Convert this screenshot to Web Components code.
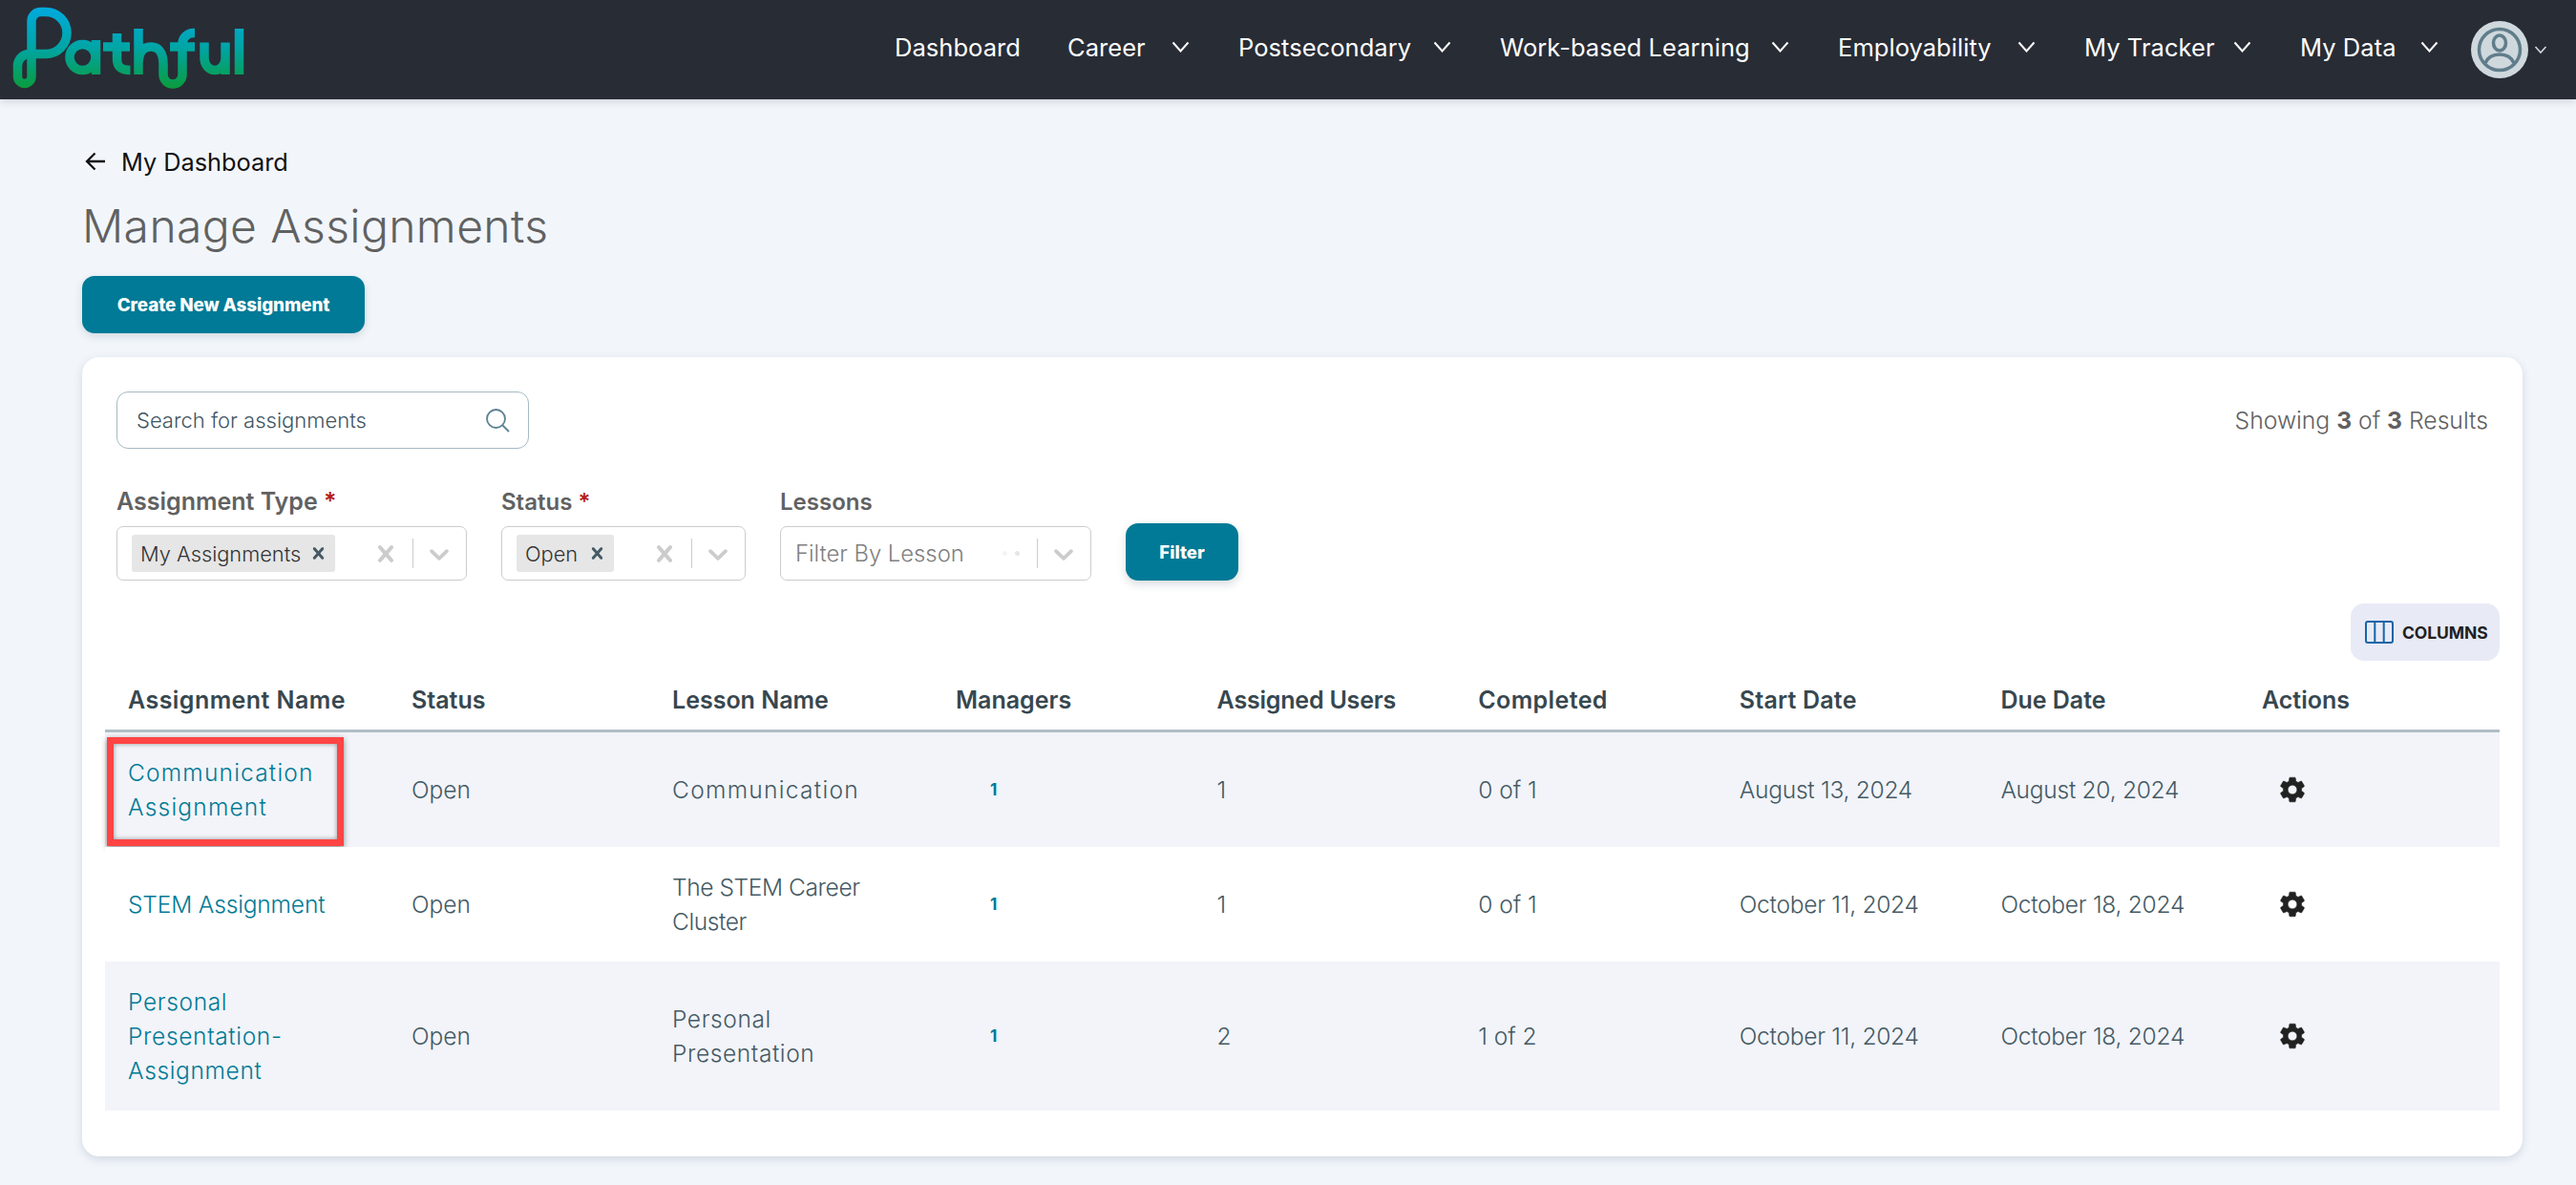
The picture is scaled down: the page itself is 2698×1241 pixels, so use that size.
<!DOCTYPE html>
<html lang="en"><head><meta charset="utf-8"><title>Manage Assignments</title>
<style>
html,body{margin:0;padding:0;background:#f2f6fb}
body{font-family:Inter,"Liberation Sans",sans-serif;height:1241px;overflow:hidden}
</style></head><body>
<app-shell>
  <app-header>
    <nav-item w="181">Dashboard</nav-item>
    <nav-item w="179" caret>Career</nav-item>
    <nav-item w="274" caret>Postsecondary</nav-item>
    <nav-item w="354" caret>Work-based Learning</nav-item>
    <nav-item w="258" caret>Employability</nav-item>
    <nav-item w="226" caret>My Tracker</nav-item>
    <nav-item w="179" pad="34" caret>My Data</nav-item>
  </app-header>
  <assign-page>
    <assign-toolbar slot="filters"></assign-toolbar>
    <assign-table slot="table">
      <assign-row alt highlight name="Communication|Assignment" name-ls="1.2" lesson="Communication" lesson-ls="1.3" assigned="1" completed="0 of 1" start="August 13, 2024" due="August 20, 2024" h="120"></assign-row>
      <assign-row name="STEM Assignment" name-ls="-.15" lesson="The STEM Career|Cluster" lesson-ls="-.4" assigned="1" completed="0 of 1" start="October 11, 2024" due="October 18, 2024" h="120"></assign-row>
      <assign-row alt name="Personal|Presentation-|Assignment" name-ls=".65" lesson="Personal|Presentation" lesson-ls=".6" assigned="2" completed="1 of 2" start="October 11, 2024" due="October 18, 2024" h="156"></assign-row>
    </assign-table>
  </assign-page>
</app-shell>
<script>
const CLEAR='M14.348 14.849c-0.469 0.469-1.229 0.469-1.697 0l-2.651-3.030-2.651 3.029c-0.469 0.469-1.229 0.469-1.697 0-0.469-0.469-0.469-1.229 0-1.697l2.758-3.15-2.759-3.152c-0.469-0.469-0.469-1.228 0-1.697s1.228-0.469 1.697 0l2.652 3.031 2.651-3.031c0.469-0.469 1.228-0.469 1.697 0s0.469 1.229 0 1.697l-2.758 3.152 2.758 3.15c0.469 0.469 0.469 1.229 0 1.698z';
const DOWN='M4.516 7.548c0.436-0.446 1.043-0.481 1.576 0l3.908 3.747 3.908-3.747c0.533-0.481 1.141-0.446 1.574 0 0.436 0.445 0.408 1.197 0 1.615-0.406 0.418-4.695 4.502-4.695 4.502-0.217 0.223-0.502 0.335-0.787 0.335s-0.57-0.112-0.789-0.335c0 0-4.287-4.084-4.695-4.502s-0.436-1.17 0-1.615z';
const GEAR='M19.14 12.94c.04-.3.06-.61.06-.94 0-.32-.02-.64-.07-.94l2.03-1.58c.18-.14.23-.41.12-.61l-1.92-3.32c-.12-.22-.37-.29-.59-.22l-2.39.96c-.5-.38-1.03-.7-1.62-.94l-.36-2.54c-.04-.24-.24-.41-.48-.41h-3.84c-.24 0-.43.17-.47.41l-.36 2.54c-.59.24-1.13.57-1.62.94l-2.39-.96c-.22-.08-.47 0-.59.22L2.74 8.87c-.12.21-.08.47.12.61l2.03 1.58c-.05.3-.09.63-.09.94s.02.64.07.94l-2.03 1.58c-.18.14-.23.41-.12.61l1.92 3.32c.12.22.37.29.59.22l2.39-.96c.5.38 1.03.7 1.62.94l.36 2.54c.05.24.24.41.48.41h3.84c.24 0 .44-.17.47-.41l.36-2.54c.59-.24 1.13-.56 1.62-.94l2.39.96c.22.08.47 0 .59-.22l1.92-3.32c.12-.22.07-.47-.12-.61l-2.01-1.58zM12 15.6c-1.98 0-3.6-1.62-3.6-3.6s1.62-3.6 3.6-3.6 3.6 1.62 3.6 3.6-1.62 3.6-3.6 3.6z';
const COLS='297px 273px 297px repeat(5,273.6px) 1fr';
function def(name,html){
  customElements.define(name,class extends HTMLElement{
    constructor(){super();this.attachShadow({mode:'open'});}
    connectedCallback(){this.shadowRoot.innerHTML=typeof html==='function'?html(this):html;}
  });
}
def('app-shell',`<style>:host{display:block}</style><slot></slot>`);
def('app-header',`<style>
:host{display:flex;align-items:center;height:104px;background:#282c35;box-shadow:0 2px 8px rgba(40,44,53,.18);position:relative;color:#fff}
nav{display:flex;margin-left:auto;align-items:center;margin-top:-6px}
.me{display:flex;align-items:center;width:110px;gap:6px}
</style>
<svg width="270" height="104" viewBox="0 0 270 104" style="display:block;flex:none" aria-label="Pathful logo" role="img">
<defs><linearGradient id="g" gradientUnits="userSpaceOnUse" x1="0" y1="8" x2="0" y2="92"><stop offset="0" stop-color="#00aadd"/><stop offset=".5" stop-color="#00a5a5"/><stop offset="1" stop-color="#0a9c3e"/></linearGradient></defs>
<g fill="none" stroke="url(#g)" stroke-width="9.500" stroke-linejoin="round">
<path d="M33 80V22a9.500 9.500 0 0 1 9.500-9.500H48a22 22 0 0 1 0 44H31a12.500 12.500 0 0 0-12.500 12.500V80a7.250 7.500 0 0 0 14.500 0"/>
<ellipse cx="86.500" cy="60" rx="13.500" ry="13.500"/><path d="M100.500 42v36"/>
<path d="M122.500 35v26c0 9 4 12.500 14 12.500M108 49h28"/>
<path d="M145 30v48M145 67c0-12 5-18 13-18s13 6 13 18v11a10 10 0 0 0 20 0V46a11.500 11.500 0 0 1 11.500-11.500H204M178 49h26"/>
<path d="M214 44.500V61a11 12.500 0 0 0 22 0V44.500M236 58v20"/>
<path d="M250.500 30v48"/>
</g></svg>
<nav><slot></slot></nav>
<div class="me">
<svg width="60" height="60" viewBox="0 0 60 60"><circle cx="30" cy="30" r="30" fill="#cfd8dc"/><g fill="none" stroke="#607d8b" stroke-width="3.500"><circle cx="30" cy="30" r="21.500"/><ellipse cx="30" cy="23" rx="6.500" ry="8"/><path d="M15 44c3-7 9-9 15-9s12 2 15 9"/></g></svg>
<svg width="14" height="10" viewBox="0 0 14 10"><path d="M1.500 2l5.500 6 5.500-6" fill="none" stroke="#cfd8dc" stroke-width="1.600"/></svg>
</div>`);
def('nav-item',t=>`<style>
:host{display:flex;align-items:center;box-sizing:border-box;font-size:25.500px;font-weight:400;letter-spacing:.05px;color:#fff;white-space:nowrap;width:${t.getAttribute('w')||181}px;padding-right:${t.hasAttribute('caret')?(t.getAttribute('pad')||'51')+'px':'0'}}
svg{margin-left:auto;display:${t.hasAttribute('caret')?'block':'none'}}
</style><span><slot></slot></span><svg width="19" height="12" viewBox="0 0 19 12"><path d="M1.500 1.500L9.500 10.500l8-9" fill="none" stroke="#fff" stroke-width="2"/></svg>`);
def('assign-page',`<style>
:host{display:block;padding:0 56px 0 86px}
.back{display:flex;align-items:center;gap:16px;height:36px;margin-top:47px;font-size:25.300px;color:#111;font-weight:400}
svg{margin-left:3px;display:block}
h1{font-weight:300;font-size:48px;letter-spacing:.4px;color:#616161;margin:22px 0 0;line-height:56px}
.create{display:flex;align-items:center;justify-content:center;width:296px;height:60px;margin-top:24px;background:#007a96;border:0;border-radius:13px;color:#fff;font:800 18.800px Inter,sans-serif;box-shadow:0 3px 8px rgba(40,60,80,.16);padding:0;letter-spacing:-.1px}
.card{background:#fff;border-radius:18px;box-shadow:0 3px 10px rgba(60,80,110,.18);margin-top:25px;padding:36px 24px 48px;box-sizing:border-box;height:837px}
</style>
<div class="back"><svg width="22" height="20" viewBox="0 0 22 20"><path d="M21 10H2M10.500 1.500L2 10l8.500 8.500" fill="none" stroke="#111" stroke-width="2.300"/></svg><span>My Dashboard</span></div>
<h1>Manage Assignments</h1>
<button class="create">Create New Assignment</button>
<div class="card"><slot name="filters"></slot><slot name="table"></slot></div>`);
def('filter-select',t=>{
 const chip=t.getAttribute('chip'),ph=t.getAttribute('placeholder');
 return `<style>
:host{display:block;width:${t.getAttribute('w')}px;font-family:Inter,sans-serif}
label{display:block;font-size:${t.getAttribute('lfs')||24}px;font-weight:600;color:#616161;height:40px;line-height:29px;white-space:nowrap}
i{font-style:normal;color:#b71c1c}
.box{display:flex;align-items:center;height:57px;box-sizing:border-box;border:1.500px solid #ccc;border-radius:7px;padding-left:15px;background:#fff}
.val{flex:1;display:flex;align-items:center;min-width:0}
.chip{display:inline-flex;align-items:center;height:39px;background:#e6e6e6;border-radius:3px;padding:0 9px 0 9px;font-size:21.800px;color:#333;white-space:nowrap;box-sizing:border-box;font-weight:350}
.chip svg{margin-left:auto}
.ph{font-size:23.800px;color:#808080;white-space:nowrap;font-weight:350}
.dots{display:flex;gap:8px;margin-right:18px}.dots b{width:5px;height:5px;border-radius:50%;background:#e6e6e6}.dots b:first-child{background:#f4f4f4}
.sep{width:1.500px;height:31px;background:#ccc;margin:0 10px 0 ${chip?'16':'0'}px;flex:none}
.ind{display:block;flex:none}
</style><label>${t.getAttribute('label')}${t.hasAttribute('req')?' <i>*</i>':''}</label>
<div class="box"><div class="val">${chip?`<span class="chip" style="width:${t.getAttribute('cw')}px">${chip}<svg width="17" height="17" viewBox="3 3 14 14"><path fill="#455a64" d="${CLEAR}"/></svg></span>`:`<span class="ph">${ph}</span>`}</div>
${chip?`<svg class="ind" width="24" height="24" viewBox="3 3 14 14"><path fill="#ccc" d="${CLEAR}"/></svg>`:`<div class="dots"><b></b><b></b></div>`}
<div class="sep"></div><svg class="ind" width="34" height="34" viewBox="0 0 20 20" style="margin-right:11px"><path fill="#ccc" d="${DOWN}"/></svg></div>`});
def('assign-toolbar',`<style>
:host{display:block}
.top{display:flex;justify-content:space-between;align-items:center;padding:0 12px;height:60px}
.search{display:flex;align-items:center;justify-content:space-between;box-sizing:border-box;width:432px;height:60px;border:1.500px solid #a5bac4;border-radius:12px;padding:0 19px 0 20px;font-size:22px;color:#3f5562;font-weight:350}
.count{font-size:24.700px;color:#616161;font-weight:350}.count b{font-weight:700}
.filters{display:flex;align-items:flex-end;padding:0 12px;margin-top:41px}
.btn{width:118px;height:60px;margin-left:36px;background:#007a96;color:#fff;border-radius:13px;display:flex;align-items:center;justify-content:center;font-weight:800;font-size:18.500px;box-shadow:0 4px 10px rgba(40,60,80,.18)}
filter-select+filter-select{margin-left:36px}
.colrow{display:flex;justify-content:flex-end;margin-top:24px}
.cols{display:flex;align-items:center;gap:9px;box-sizing:border-box;width:156px;height:60px;padding-left:15px;background:#e8eaf6;border-radius:14px;font-size:17.500px;font-weight:700;color:#212121;white-space:nowrap;letter-spacing:-.1px}
</style>
<div class="top"><div class="search"><span>Search for assignments</span><svg width="26" height="26" viewBox="0 0 26 26"><circle cx="11.500" cy="11.500" r="9.500" fill="none" stroke="#5b8293" stroke-width="1.800"/><path d="M18.500 18.500L25 25" stroke="#5b8293" stroke-width="1.800"/></svg></div>
<div class="count">Showing <b>3</b> of <b>3</b> Results</div></div>
<div class="filters">
<filter-select w="367" lfs="25" label="Assignment Type" req chip="My Assignments" cw="213"></filter-select>
<filter-select w="256" label="Status" req chip="Open" cw="102"></filter-select>
<filter-select w="326" label="Lessons" placeholder="Filter By Lesson"></filter-select>
<div class="btn">Filter</div></div>
<div class="colrow"><div class="cols"><svg width="30" height="24" viewBox="0 0 30 24"><rect x="1" y="1" width="28" height="22" rx="2" fill="none" stroke="#1565a8" stroke-width="2"/><path d="M10.300 1v22M19.700 1v22" stroke="#1565a8" stroke-width="2"/></svg><span>COLUMNS</span></div></div>`);
def('assign-table',`<style>
:host{display:block}
.head{display:grid;grid-template-columns:${COLS};height:62px;padding-top:10px;align-items:center;border-bottom:3px solid #b0bec5;font-size:25px;font-weight:600;color:#37474f;white-space:nowrap;letter-spacing:0}
.head span{padding-left:24px}
</style>
<div class="head"><span style="letter-spacing:.45px">Assignment Name</span><span>Status</span><span>Lesson Name</span><span>Managers</span><span style="letter-spacing:-.2px">Assigned Users</span><span style="letter-spacing:.4px">Completed</span><span style="letter-spacing:.2px">Start Date</span><span>Due Date</span><span>Actions</span></div>
<slot></slot>`);
def('assign-row',t=>{
 const g=n=>(t.getAttribute(n)||'').split('|').join('<br>');
 return `<style>
:host{display:grid;grid-template-columns:${COLS};align-items:center;height:${t.getAttribute('h')}px;background:${t.hasAttribute('alt')?'#f2f4f9':'#fff'};position:relative;font-size:24.500px;line-height:36px;color:#455a64;white-space:nowrap;font-weight:350}
div{padding-left:24px}
.name{color:#007a96}
.m{padding-left:60px;color:#007a96;font-size:17px;font-weight:700}
.d{letter-spacing:-.25px}
svg{display:block;margin-left:16px}
.hl{position:absolute;left:2px;top:5px;width:248px;height:114px;box-sizing:border-box;border:7.500px solid #ff4444;box-shadow:0 2px 6px rgba(0,0,0,.45),inset 0 0 5px rgba(0,0,0,.4);padding:0}
</style>
<div class="name" style="letter-spacing:${t.getAttribute('name-ls')}px">${g('name')}</div><div>Open</div><div style="letter-spacing:${t.getAttribute('lesson-ls')}px">${g('lesson')}</div><div class="m">1</div><div>${g('assigned')}</div><div>${g('completed')}</div><div class="d">${g('start')}</div><div class="d">${g('due')}</div>
<div><svg width="32" height="32" viewBox="0 0 24 24"><path fill="#212121" stroke="#212121" stroke-width=".4" d="${GEAR}"/></svg></div>
${t.hasAttribute('highlight')?'<div class="hl"></div>':''}`});
</script>
</body></html>
